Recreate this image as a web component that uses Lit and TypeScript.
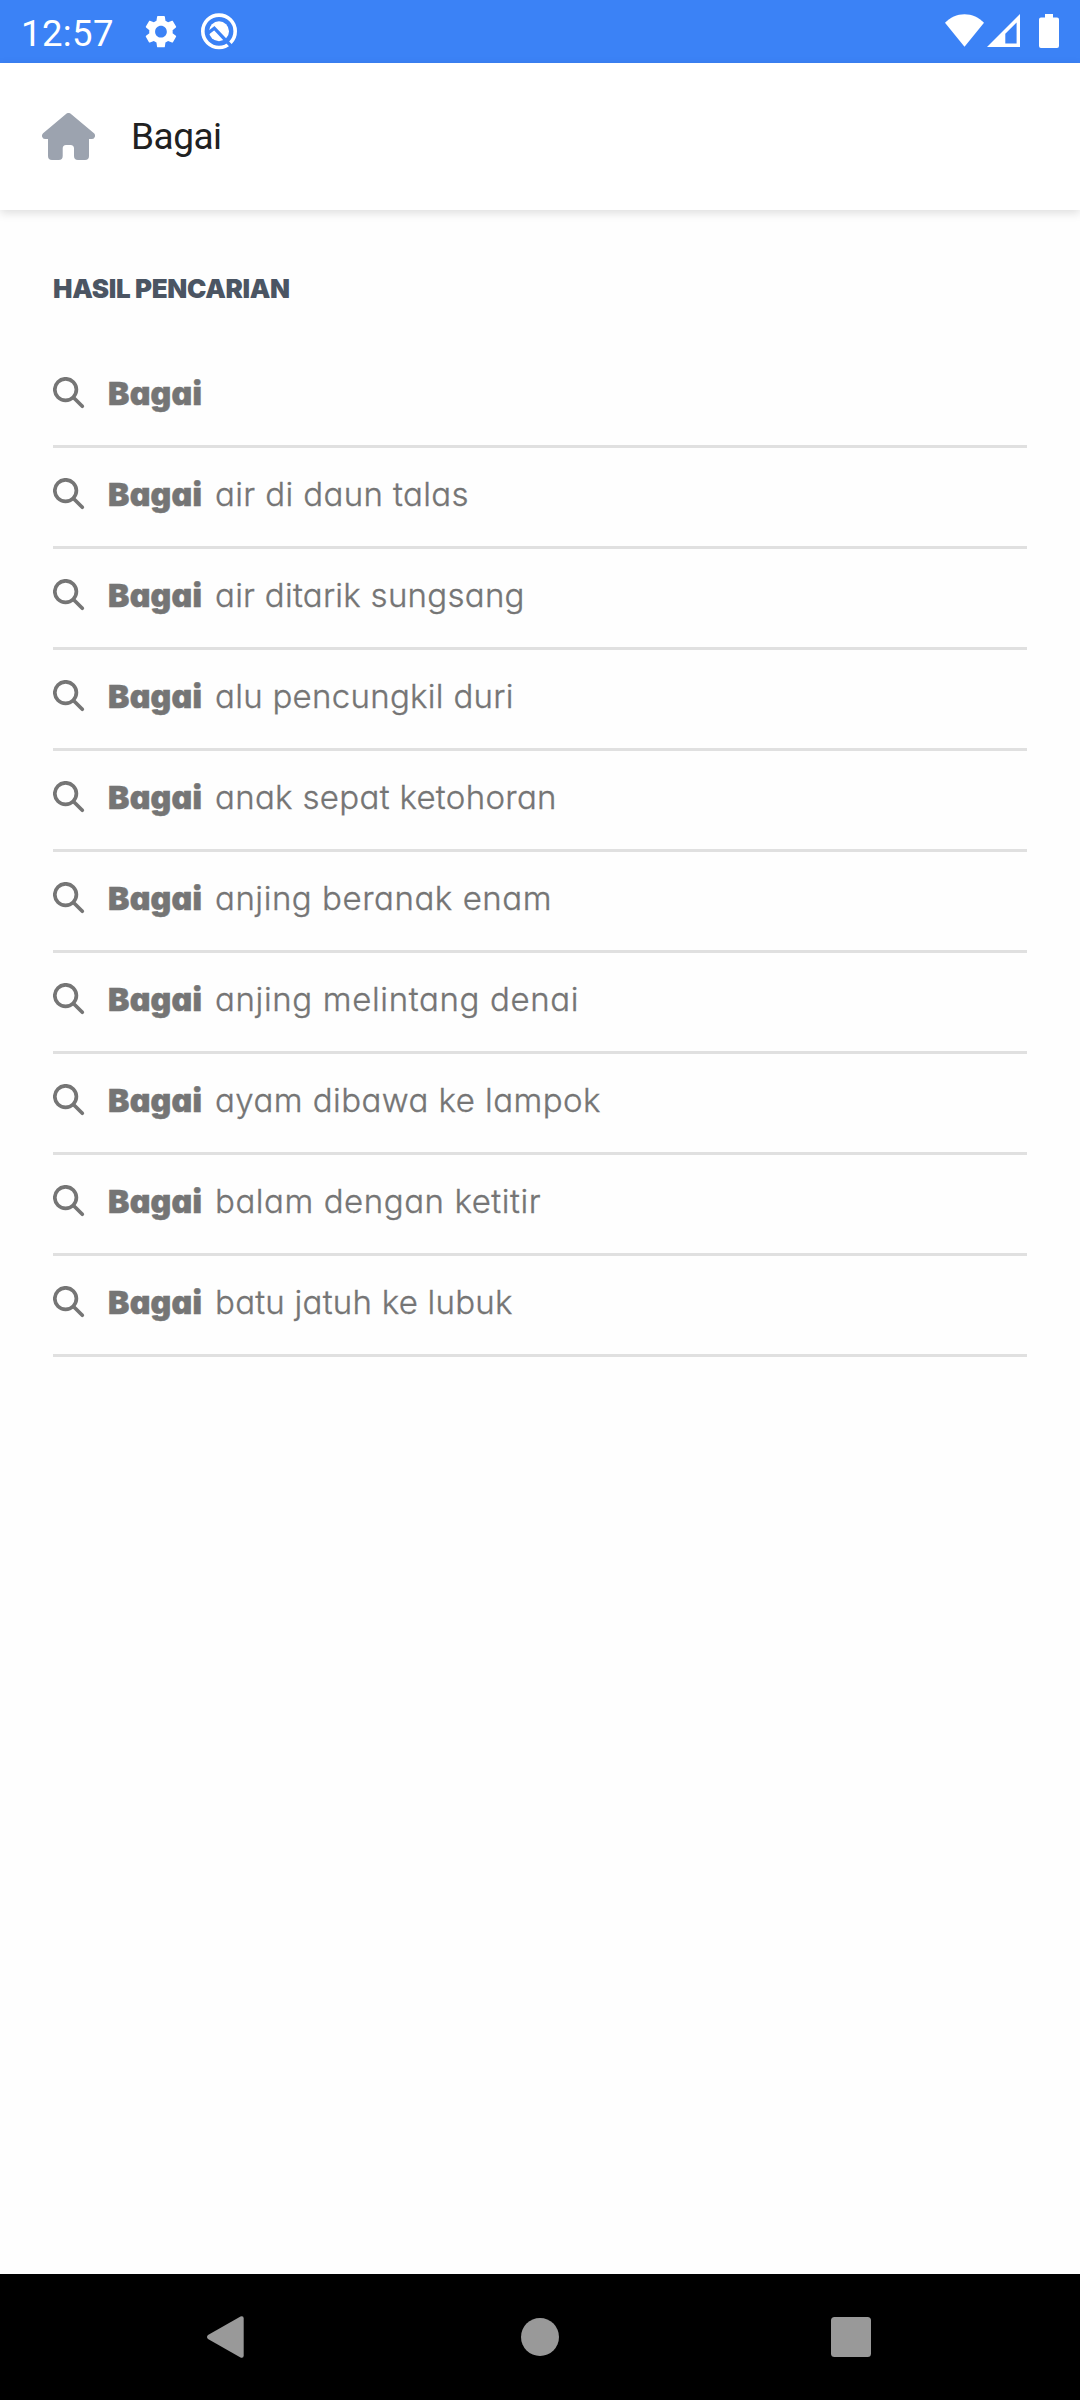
import { LitElement, html, css, svg } from "lit";
import { customElement, property } from "lit/decorators.js";

interface Suggestion {
  rest: string;
  width: number;
}

const TERM = "Bagai";

const SUGGESTIONS: Suggestion[] = [
  { rest: "", width: 0 },
  { rest: "air di daun talas", width: 253.5 },
  { rest: "air ditarik sungsang", width: 309.5 },
  { rest: "alu pencungkil duri", width: 298.5 },
  { rest: "anak sepat ketohoran", width: 341.5 },
  { rest: "anjing beranak enam", width: 336.5 },
  { rest: "anjing melintang denai", width: 363.5 },
  { rest: "ayam dibawa ke lampok", width: 385.5 },
  { rest: "balam dengan ketitir", width: 325.5 },
  { rest: "batu jatuh ke lubuk", width: 297.5 },
];

/** Text whose letter spacing is chosen so that it occupies a given width. */
@customElement("fitted-text")
export class FittedText extends LitElement {
  static styles = css`
    :host {
      display: inline-block;
      white-space: pre;
    }
  `;

  @property() text = "";
  @property({ type: Number }) width = 0;

  render() {
    return html`<span>${this.text}</span>`;
  }

  updated() {
    const span = this.renderRoot.querySelector("span")!;
    span.style.letterSpacing = "0px";
    const natural = span.getBoundingClientRect().width;
    const gaps = Math.max(1, this.text.length - 1);
    span.style.letterSpacing = `${(this.width - natural) / gaps}px`;
  }
}

@customElement("status-bar")
export class StatusBar extends LitElement {
  static styles = css`
    :host {
      display: flex;
      align-items: center;
      justify-content: space-between;
      height: 63px;
      background: #3b82f6;
      color: #fff;
      font: 400 36.5px/63px Roboto, sans-serif;
    }
    .left {
      display: flex;
      align-items: center;
      padding-left: 21px;
      height: 63px;
    }
    .time {
      width: 121px;
      padding-top: 3px;
      letter-spacing: 0.4px;
    }
    svg {
      display: block;
    }
    .marks {
      width: 105px;
      height: 63px;
    }
    .right {
      width: 150px;
      height: 63px;
    }
  `;

  render() {
    return html`
      <div class="left">
        <span class="time">12:57</span>
        <svg class="marks" viewBox="142 0 105 63">
          <path
            transform="translate(141.4 12.1) scale(1.63)"
            fill="#fff"
            d="M19.14 12.94c.04-.3.06-.61.06-.94 0-.32-.02-.64-.07-.94l2.03-1.58c.18-.14.23-.41.12-.61l-1.92-3.32c-.12-.22-.37-.29-.59-.22l-2.39.96c-.5-.38-1.03-.7-1.62-.94l-.36-2.54c-.04-.24-.24-.41-.48-.41h-3.84c-.24 0-.43.17-.47.41l-.36 2.54c-.59.24-1.13.57-1.62.94l-2.39-.96c-.22-.08-.47 0-.59.22L2.74 8.87c-.12.21-.08.47.12.61l2.03 1.58c-.05.3-.09.63-.09.94s.02.64.07.94l-2.03 1.58c-.18.14-.23.41-.12.61l1.92 3.32c.12.22.37.29.59.22l2.39-.96c.5.38 1.03.7 1.62.94l.36 2.54c.05.24.24.41.48.41h3.84c.24 0 .44-.17.47-.41l.36-2.54c.59-.24 1.13-.56 1.62-.94l2.39.96c.22.08.47 0 .59-.22l1.92-3.32c.12-.22.07-.47-.12-.61l-2.01-1.58zM12 15.6c-1.98 0-3.6-1.62-3.6-3.6s1.62-3.6 3.6-3.6 3.6 1.62 3.6 3.6-1.62 3.6-3.6 3.6z"
          />
          <circle cx="219" cy="31.3" r="16.2" fill="none" stroke="#fff" stroke-width="3.6" />
          <circle cx="219" cy="31.3" r="10" fill="#fff" />
          <path d="M207.500 33.500L214.300 28.200L233 48" fill="none" stroke="#3b82f6" stroke-width="3.300" />
        </svg>
      </div>
      <svg class="right" viewBox="930 0 150 63">
        <path fill="#fff" d="M945 22.8C950 17.5 957 14.2 964.5 14.2S979 17.5 984 22.8L964.5 46.8Z" />
        <path
          fill="#fff"
          fill-rule="evenodd"
          d="M987 47L1020 14V47ZM1005.3 43.5H1016.6V22.4L1005.3 33.8Z"
        />
        <path
          fill="#fff"
          d="M1045 14H1053V17.5H1057Q1059 17.5 1059 19.5V46Q1059 48 1057 48H1041Q1039 48 1039 46V19.5Q1039 17.5 1041 17.5H1045Z"
        />
      </svg>
    `;
  }
}

@customElement("app-bar")
export class AppBar extends LitElement {
  static styles = css`
    :host {
      display: flex;
      align-items: center;
      height: 147px;
      padding-left: 42px;
      box-sizing: border-box;
      background: #fff;
      box-shadow: 0 3px 9px rgba(0, 0, 0, 0.13);
    }
    .home {
      display: block;
      width: 53px;
      height: 48px;
    }
    .title {
      margin-left: 36px;
      color: #212121;
      font: 400 37px/48px Roboto, sans-serif;
      letter-spacing: -0.5px;
    }
  `;

  render() {
    return html`
      <svg class="home" viewBox="42 113 53 48">
        <path
          fill="#9ca3af"
          d="M66.6 113.6Q68.5 112.2 70.4 113.6L94 133.2Q95.4 134.6 95 136.4Q94.2 139 92 139H89V156Q89 160 85 160H78Q74 160 74 156V148.500Q74 145 70.500 145H66Q62.700 145 62.700 148.500V156Q62.700 160 58.700 160H52Q48 160 48 156V139H45Q42.800 139 42 136.400Q41.700 134.600 43.100 133.200Z"
        />
      </svg>
      <span class="title">${TERM}</span>
    `;
  }
}

const searchIcon = svg`
  <circle cx="12.6" cy="12.6" r="10.8" />
  <path d="M20.700 20.700L29.300 29.300" />
`;

@customElement("search-results")
export class SearchResults extends LitElement {
  static styles = css`
    :host {
      display: block;
      padding: 56px 53px 0;
      font-family: Inter, Lato, sans-serif;
      font-feature-settings: "cv11";
    }
    .heading {
      display: block;
      height: 46px;
      color: #4b5563;
      font-size: 26px;
      font-weight: 900;
      line-height: 46px;
    }
    .list {
      margin: 35px 0 0;
      padding: 0;
      list-style: none;
    }
    .row {
      display: flex;
      align-items: flex-start;
      height: 101px;
      box-sizing: border-box;
      padding-top: 30px;
      border-bottom: 3px solid #e0e0e0;
      color: #757575;
      line-height: 33px;
    }
    .icon {
      display: block;
      width: 32px;
      height: 32px;
      fill: none;
      stroke: #757575;
      stroke-width: 3.7;
      stroke-linecap: round;
    }
    .term {
      width: 107px;
      margin-left: 23px;
      font-size: 32px;
      font-weight: 900;
      -webkit-text-stroke: 0.5px #757575;
    }
    .rest {
      font-size: 33px;
      font-weight: 300;
      -webkit-text-stroke: 0.35px #757575;
    }
  `;

  render() {
    return html`
      <fitted-text class="heading" text="HASIL PENCARIAN" width="237"></fitted-text>
      <ul class="list">
        ${SUGGESTIONS.map(
          (s) => html`
            <li class="row">
              <svg class="icon" viewBox="0 0 32 32">${searchIcon}</svg>
              <fitted-text class="term" text=${TERM} width="94"></fitted-text>
              ${s.rest
                ? html`<fitted-text class="rest" text=${s.rest} width=${s.width}></fitted-text>`
                : null}
            </li>
          `
        )}
      </ul>
    `;
  }
}

@customElement("nav-bar")
export class NavBar extends LitElement {
  static styles = css`
    :host {
      display: block;
      height: 126px;
      background: #000;
    }
    svg {
      display: block;
      width: 1080px;
      height: 126px;
      fill: #999;
    }
  `;

  render() {
    return html`
      <svg viewBox="0 0 1080 126">
        <path d="M208 61L240.500 42.500Q243.700 41.500 243.700 44.500V81.500Q243.700 84.500 240.500 83.500L208 65Q206 63 208 61Z" />
        <circle cx="540" cy="63" r="19" />
        <rect x="831" y="43" width="40" height="40" rx="3.500" />
      </svg>
    `;
  }
}

@customElement("app-root")
export class AppRoot extends LitElement {
  static styles = css`
    :host {
      display: flex;
      flex-direction: column;
      width: 1080px;
      height: 2400px;
      background: #fefefe;
    }
    .results {
      flex: 1;
    }
  `;

  render() {
    return html`
      <status-bar></status-bar>
      <app-bar></app-bar>
      <search-results class="results"></search-results>
      <nav-bar></nav-bar>
    `;
  }
}
